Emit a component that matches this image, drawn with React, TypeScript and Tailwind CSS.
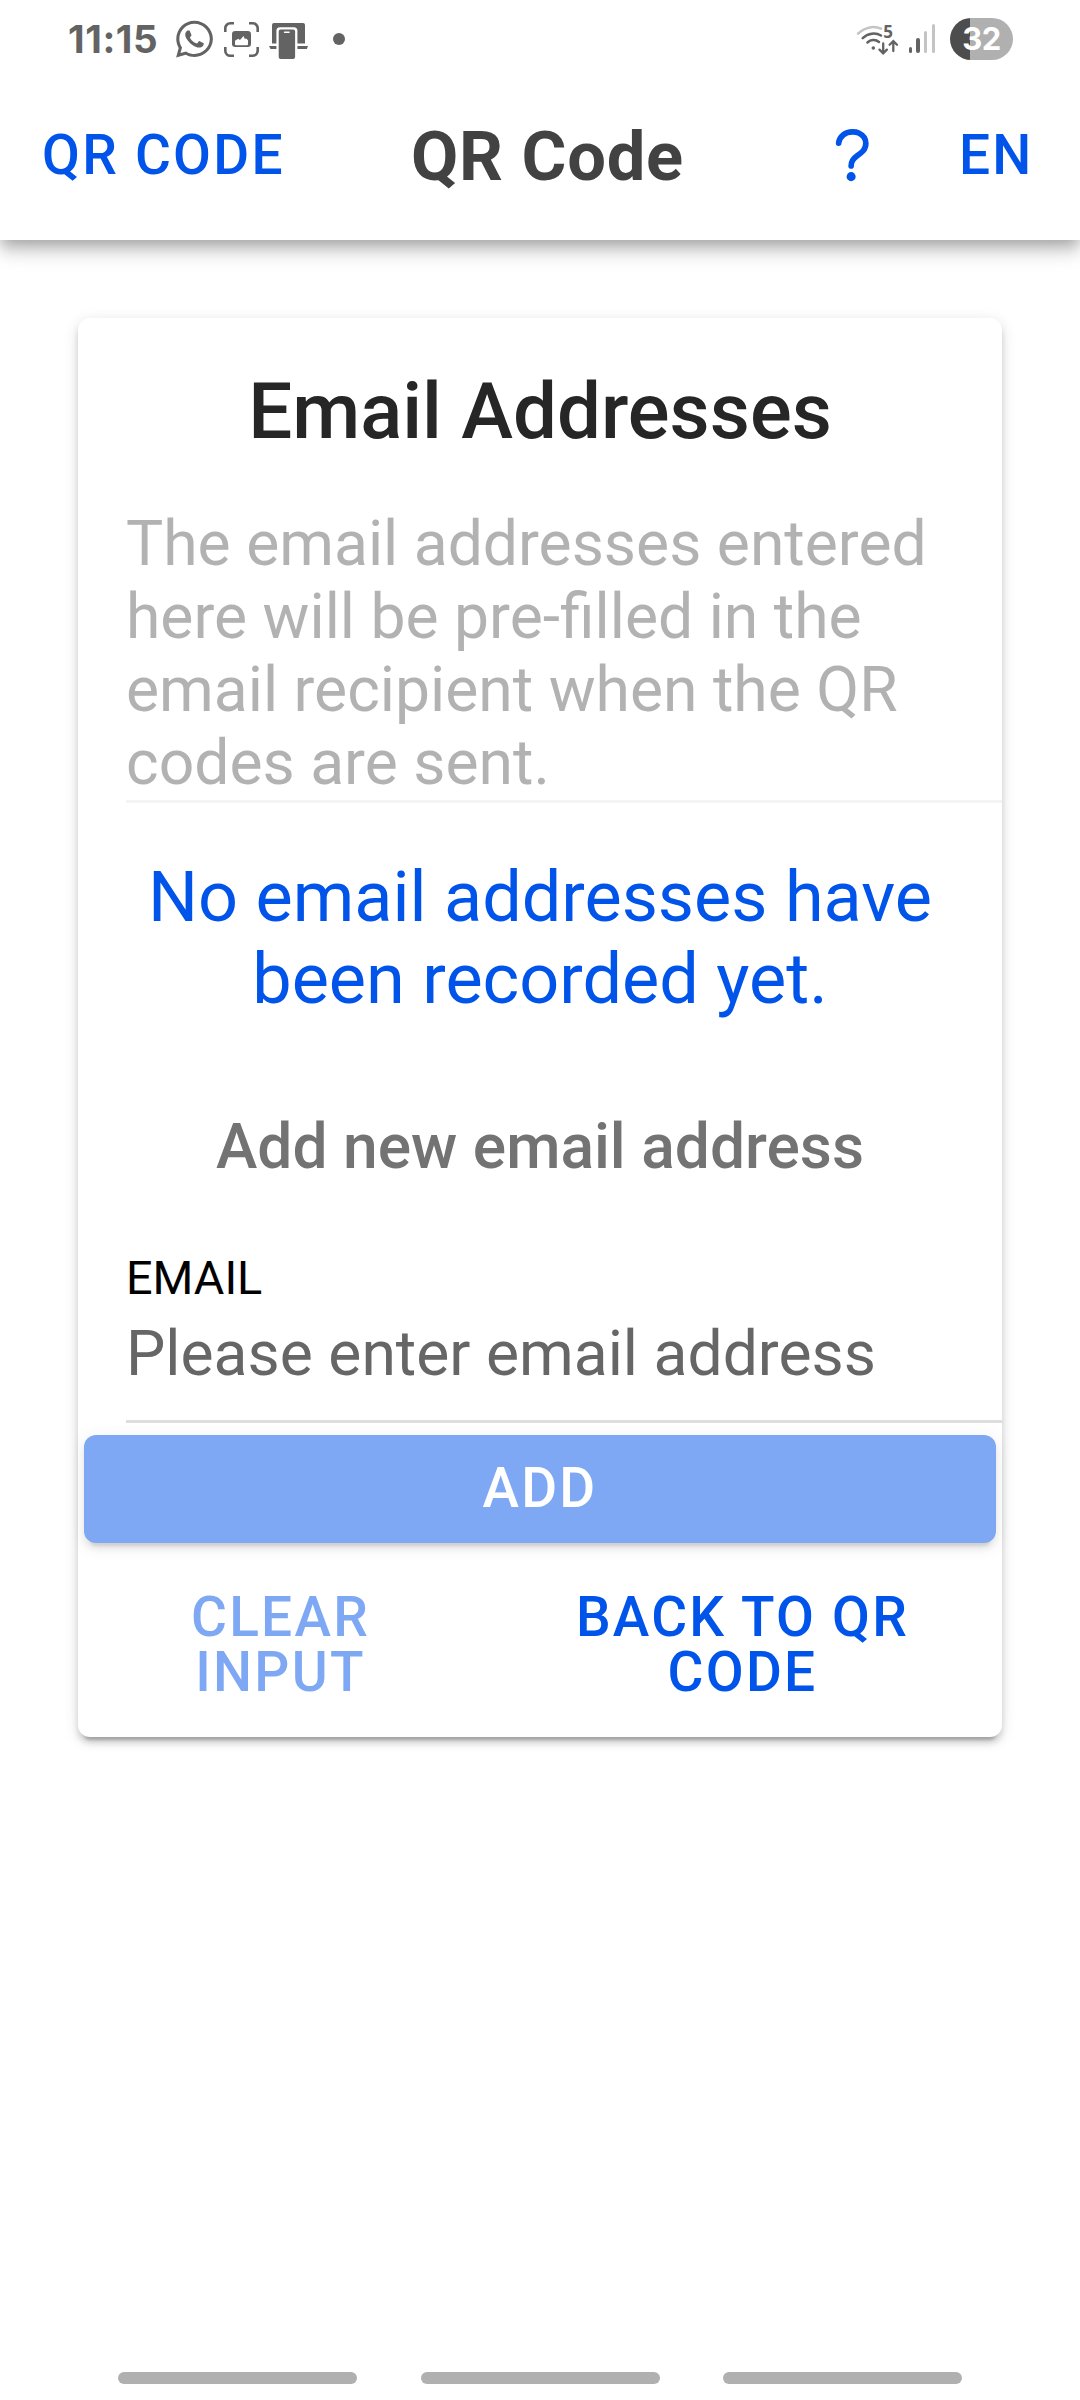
import React from 'react';
import { FaWhatsapp } from 'react-icons/fa';

function ScreenshotIcon() {
  return (
    <svg className="h-[35px] w-[35px]" viewBox="0 0 35 35" fill="none">
      <path
        d="M1.3 10V6.3a5 5 0 0 1 5-5H10M25 1.3h3.7a5 5 0 0 1 5 5V10M33.7 25v3.7a5 5 0 0 1-5 5H25M10 33.7H6.3a5 5 0 0 1-5-5V25"
        stroke="#636363"
        strokeWidth="2.6"
      />
      <rect x="8" y="9" width="19" height="16" rx="3.2" fill="#636363" />
      <path d="M11 18.8l3.2-2 1.8 1.2 3.6-4 1.2 3 1.4-.4L24 18.3v4.2l-.8.8H11.8l-.8-.8z" fill="white" />
    </svg>
  );
}

function LinkedDevicesIcon() {
  return (
    <svg className="h-9 w-[39px]" viewBox="0 0 39 36">
      <path d="M5 0h29a2 2 0 0 1 2 2v18.5H3V2a2 2 0 0 1 2-2z" fill="#636363" />
      <path d="M0 23h39l-1.2 3H1.5z" fill="#636363" />
      <rect x="7.4" y="4.2" width="21" height="34" rx="3.5" fill="white" />
      <rect x="9.7" y="6.6" width="16.4" height="29.4" rx="2" fill="#636363" />
      <rect x="14.8" y="8.4" width="6" height="1.6" rx=".8" fill="white" />
    </svg>
  );
}

function WifiIcon() {
  return (
    <svg className="h-8 w-[43px] overflow-visible" viewBox="0 0 43 32" fill="none" strokeLinecap="round">
      <path d="M2 9.7C9.5 2.6 18.5 1.7 25 4.7" stroke="#c4c4c4" strokeWidth="2.5" />
      <path d="M6.7 14.2C12 9 19.5 8.200 25 11.5" stroke="#636363" strokeWidth="2.5" />
      <path d="M11.5 18.5C14.5 15.5 19.5 15 23 18" stroke="#636363" strokeWidth="2.5" />
      <circle cx="17.3" cy="24" r="1.8" fill="#636363" />
      <path d="M27.2 19.5v9.500M23.5 25.600l3.700 3.700 3.700-3.700" stroke="#636363" strokeWidth="2.300" />
      <path d="M37.3 27v-9.500M33.6 20.8l3.700-3.700 3.700 3.700" stroke="#636363" strokeWidth="2.300" />
      <text x="27.3" y="13.7" fill="#636363" className="font-['Open_Sans'] text-[17px] font-bold">
        5
      </text>
    </svg>
  );
}

function HelpIcon() {
  return (
    <svg className="h-[72.500px] w-[72.500px]" viewBox="0 0 512 512" fill="none">
      <path
        d="M160 164s1.44-33 33.54-59.46C212.6 88.83 235.49 84.28 256 84c18.73-.23 35.47 2.94 45.48 7.82C318.59 100.2 352 120.6 352 164c0 45.67-29.18 66.37-62.35 89.18S248 298.36 248 324"
        stroke="currentColor"
        strokeWidth="40"
        strokeLinecap="round"
      />
      <circle cx="248" cy="400" r="32" fill="currentColor" />
    </svg>
  );
}

function StatusBar() {
  return (
    <div className="flex h-[72px] items-start px-[67px] pt-[18px]">
      <span className="w-[109px] pl-px font-['Inter'] text-[38.500px] leading-[42px] font-bold tracking-[0.600px] text-[#636363]">
        11:15
      </span>
      <FaWhatsapp className="h-[42px] w-[37px] text-[#636363]" />
      <div className="mt-1 ml-[11px]">
        <ScreenshotIcon />
      </div>
      <div className="mt-[5px] ml-[10px]">
        <LinkedDevicesIcon />
      </div>
      <div className="mt-[15px] ml-[25px] size-3 rounded-full bg-[#636363]" />
      <div className="mt-[6px] ml-auto">
        <WifiIcon />
      </div>
      <div className="mt-[6px] mr-[15px] ml-[10px] flex items-end gap-[4.500px]">
        <div className="h-[6px] w-[3.200px] rounded-full bg-[#636363]" />
        <div className="h-[15px] w-[3.200px] rounded-full bg-[#636363]" />
        <div className="h-[22px] w-[3.200px] rounded-full bg-[#c4c4c4]" />
        <div className="h-[29px] w-[3.200px] rounded-full bg-[#c4c4c4]" />
      </div>
      <div className="flex h-[42px] w-[63px] items-center justify-center rounded-full bg-linear-to-r from-[#4d4d4d] from-[31.700%] to-[#b0b0b0] to-[31.700%] font-['Inter'] text-[31px] leading-[42px] font-bold tracking-[-0.500px] text-white">
        32
      </div>
    </div>
  );
}

export default function App() {
  return (
    <div className="flex h-[2400px] w-[1080px] flex-col overflow-hidden bg-white font-['Roboto',sans-serif]">
      <header className="h-[240px] shrink-0 bg-white shadow-[0_6px_12px_-3px_rgba(0,0,0,0.2),0_12px_15px_0_rgba(0,0,0,0.14),0_3px_30px_0_rgba(0,0,0,0.12)]">
        <StatusBar />
        <div className="flex h-[168px] items-center pl-[42px] text-[#0054e9]">
          <button className="mb-[2px] w-[369px] text-left text-[55px] leading-[55px] font-medium tracking-[2.250px] whitespace-nowrap">
            QR CODE
          </button>
          <h1 className="mt-[2px] w-[404.500px] text-[68.700px] leading-[80px] font-bold tracking-[0.700px] whitespace-nowrap text-[#424242]">
            QR Code
          </h1>
          <HelpIcon />
          <button className="mb-[2px] ml-[71px] text-[55px] leading-[55px] font-medium tracking-[2.250px]">EN</button>
        </div>
      </header>

      <main className="mx-[78px] mt-[78px] flex h-[1419px] shrink-0 flex-col rounded-xl bg-white shadow-[0_9px_3px_-6px_rgba(0,0,0,0.2),0_6px_6px_0_rgba(0,0,0,0.14),0_3px_15px_0_rgba(0,0,0,0.12)]">
        <h2 className="mt-12 text-center text-[78px] leading-[92px] font-medium text-[#262626]">Email Addresses</h2>
        <p className="mt-[49px] ml-12 h-[296px] border-b-[3px] border-[#f4f4f4] text-[62.400px] leading-[73px] text-[#b2b2b2]">
          The email addresses entered
          <br />
          here will be pre-filled in the
          <br />
          email recipient when the QR
          <br />
          codes are sent.
        </p>
        <p className="mt-[53px] text-center text-[70.200px] leading-[82px] text-[#0054e9]">
          No email addresses have
          <br />
          been recorded yet.
        </p>
        <h3 className="mt-[90px] text-center text-[62.300px] leading-[73px] font-medium text-[#737373]">
          Add new email address
        </h3>
        <label className="mt-[68px] ml-12 text-[46.800px] leading-[54px] text-black">EMAIL</label>
        <div className="mt-3 ml-12 h-[106px] border-b-[3px] border-[#dedede] text-[62.400px] leading-[73px] text-[#666666]">
          Please enter email address
        </div>
        <button className="mx-[6px] mt-3 h-[108px] rounded-xl bg-[#0054e9] pb-px text-[55px] leading-[55px] font-medium tracking-[2.250px] text-white opacity-50 shadow-[0_9px_3px_-6px_rgba(0,0,0,0.2),0_6px_6px_0_rgba(0,0,0,0.14),0_3px_15px_0_rgba(0,0,0,0.12)]">
          ADD
        </button>
        <div className="mt-[47px] flex text-[55px] leading-[55px] font-medium tracking-[2.250px] text-[#0054e9]">
          <button className="w-[405px] opacity-50">
            CLEAR
            <br />
            INPUT
          </button>
          <button className="w-[519px]">
            BACK TO QR
            <br />
            CODE
          </button>
        </div>
      </main>

      <nav className="mt-auto mb-4 flex gap-[63.500px] pl-[118px]">
        <div className="h-3 w-[239px] rounded-full bg-[#b0b0b0]" />
        <div className="h-3 w-[239px] rounded-full bg-[#b0b0b0]" />
        <div className="h-3 w-[239px] rounded-full bg-[#b0b0b0]" />
      </nav>
    </div>
  );
}
